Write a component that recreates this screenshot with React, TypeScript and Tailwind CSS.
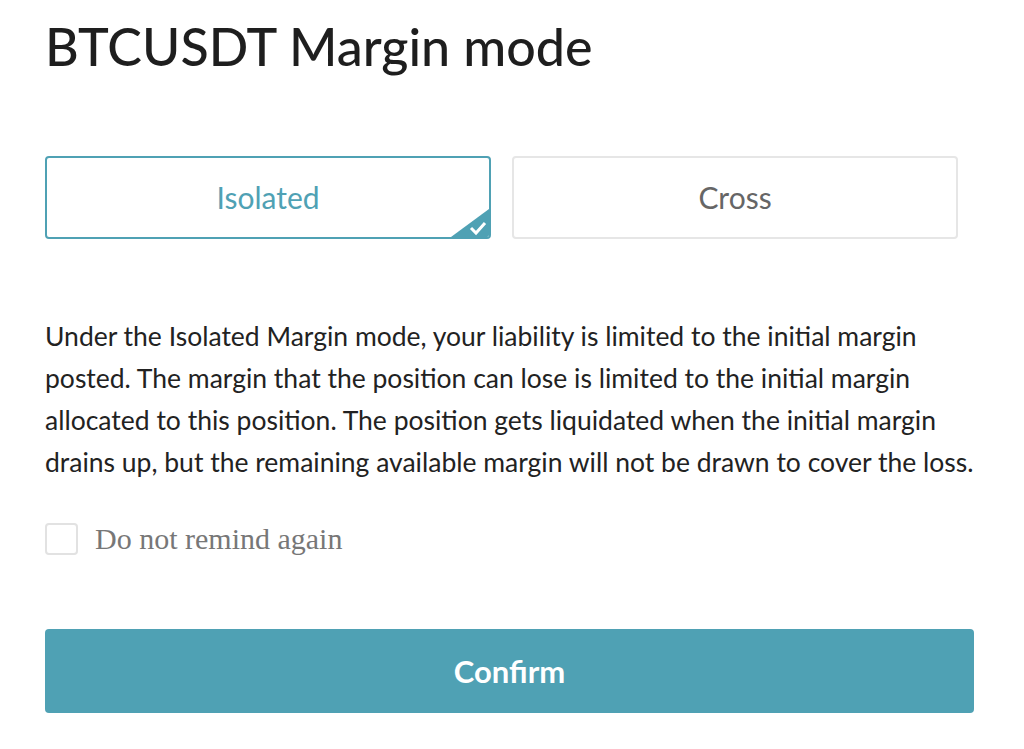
export default function App() {
  return (
    <div className="min-h-screen bg-white pl-[45px] pr-[50px] pt-[16px] font-['Lato',sans-serif]">
      <h1 className="text-[52px] leading-[60px] font-medium text-[#1e1e1e]">BTCUSDT Margin mode</h1>

      <div className="mt-[80px] flex gap-[21px]">
        <button className="relative h-[83px] w-[446px] rounded-[4px] border-2 border-[#4fa1b4] text-[30px] text-[#4fa1b4] overflow-hidden">
          Isolated
          <svg className="absolute bottom-0 right-0" width="38" height="28" viewBox="0 0 38 28">
            <path d="M38 0 L38 28 L0 28 Z" fill="#4fa1b4" />
            <path d="M20 19 L25 24 L34 14" fill="none" stroke="#fff" strokeWidth="3" />
          </svg>
        </button>
        <button className="h-[83px] w-[446px] rounded-[4px] border-2 border-[#e6e6e6] text-[30px] text-[#666]">
          Cross
        </button>
      </div>

      <p className="mt-[76px] w-[935px] text-[26.5px] leading-[42px] text-[#222]">
        Under the Isolated Margin mode, your liability is limited to the initial margin posted. The margin that the position can lose is limited to the initial margin allocated to this position. The position gets liquidated when the initial margin drains up, but the remaining available margin will not be drawn to cover the loss.
      </p>

      <label className="mt-[33px] flex items-center gap-[17px]">
        <span className="h-[32px] w-[33px] rounded-[4px] border-2 border-[#e2e2e2]" />
        <span className="font-['Liberation_Serif',serif] text-[30px] text-[#777]">Do not remind again</span>
      </label>

      <button className="mt-[68px] h-[84px] w-[929px] rounded-[4px] bg-[#4fa1b4] text-[31px] font-bold text-white">
        Confirm
      </button>
    </div>
  );
}
